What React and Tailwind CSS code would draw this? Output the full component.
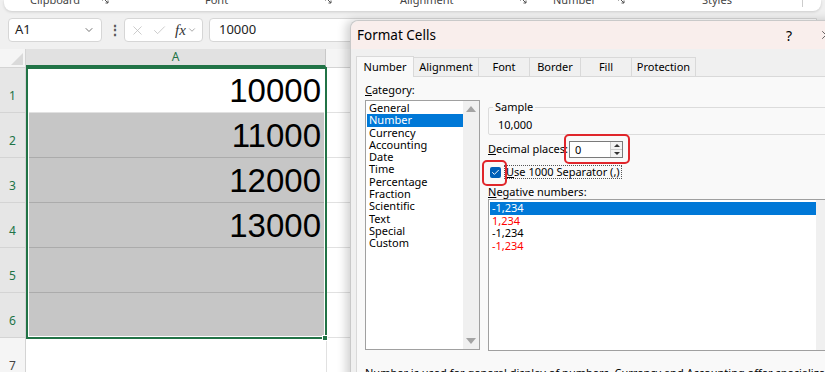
import { ChevronDown, X, Check } from 'lucide-react';

const UI = { fontFamily: '"Noto Sans", "Open Sans", sans-serif' };
const ARIAL = { fontFamily: '"Liberation Sans", Arial, sans-serif' };

const ROWS = [
  { n: 1, v: '10000' },
  { n: 2, v: '11000' },
  { n: 3, v: '12000' },
  { n: 4, v: '13000' },
  { n: 5, v: '' },
  { n: 6, v: '' },
  { n: 7, v: '' },
];

const CATEGORIES = [
  'General', 'Number', 'Currency', 'Accounting', 'Date', 'Time',
  'Percentage', 'Fraction', 'Scientific', 'Text', 'Special', 'Custom',
];

const NEGATIVES = [
  { t: '-1,234', c: 'text-white bg-[#0078d7]' },
  { t: '1,234', c: 'text-[#ff0000]' },
  { t: '-1,234', c: 'text-black' },
  { t: '-1,234', c: 'text-[#ff0000]' },
];

const TABS = [
  { t: 'Number', w: 'w-[58px]' },
  { t: 'Alignment', w: 'w-[65px]' },
  { t: 'Font', w: 'w-[51px]' },
  { t: 'Border', w: 'w-[51px]' },
  { t: 'Fill', w: 'w-[51px]' },
  { t: 'Protection', w: 'w-[64px]' },
];

function Launcher() {
  return (
    <svg width="7" height="7" viewBox="0 0 7 7" className="text-[#555]">
      <path d="M0.5 0.5h3M0.5 0.5v3M2 2l4 4M6 3.5V6H3.5" stroke="currentColor" strokeWidth="1" fill="none" />
    </svg>
  );
}

function Ribbon() {
  return (
    <div className="h-[11px] mx-[4px] bg-white rounded-b-lg shadow-[0_1px_3px_rgba(0,0,0,0.15)] overflow-hidden relative text-[11px] text-[#444]" style={UI}>
      <div className="flex items-center -mt-[9px] h-[18px] pl-[26px]">
        <span className="w-[72px] shrink-0">Clipboard</span>
        <span className="w-[103px] shrink-0"><Launcher /></span>
        <span className="w-[120px] shrink-0">Font</span>
        <span className="w-[75px] shrink-0"><Launcher /></span>
        <span className="w-[120px] shrink-0">Alignment</span>
        <span className="w-[33px] shrink-0"><Launcher /></span>
        <span className="w-[65px] shrink-0">Number</span>
        <span className="w-[84px] shrink-0"><Launcher /></span>
        <span className="w-[100px] shrink-0">Styles</span>
        <span className="w-px h-[14px] bg-[#ccc] shrink-0" />
      </div>
    </div>
  );
}

function FormulaBar() {
  return (
    <div className="flex items-center h-[24px] mt-[7px] px-[8px] gap-[6px]" style={UI}>
      <div className="w-[94px] h-[24px] bg-white border border-[#d6d6d6] rounded-[4px] flex items-center justify-between px-[6px]">
        <span className="text-[13px] text-[#222]">A1</span>
        <ChevronDown size={12} strokeWidth={1.5} className="text-[#444]" />
      </div>
      <span className="text-[14px] text-[#555] font-bold w-[10px] text-center leading-none">⋮</span>
      <div className="w-[79px] h-[24px] bg-white border border-[#d6d6d6] rounded-[4px] flex items-center px-[5px] gap-[7px]">
        <X size={15} strokeWidth={1.2} className="text-[#bbb]" />
        <Check size={15} strokeWidth={1.2} className="text-[#bbb]" />
        <span className="text-[15px] italic text-[#333] ml-[1px]" style={{ fontFamily: '"Liberation Serif", serif' }}>fx</span>
        <ChevronDown size={10} strokeWidth={1.5} className="text-[#777] -ml-[6px]" />
      </div>
      <div className="flex-1 h-[24px] bg-white border border-[#d6d6d6] rounded-l-[4px] flex items-center px-[9px]">
        <span className="text-[13px] text-[#222]">10000</span>
      </div>
    </div>
  );
}

function Sheet() {
  return (
    <div className="mt-[7px] bg-white">
      <div className="flex h-[19px] bg-[#f5f5f5] border-b border-[#d4d4d4]">
        <div className="w-[26px] border-r border-[#d4d4d4] relative">
          <div className="absolute right-[2px] bottom-[2px] w-0 h-0 border-l-[12px] border-l-transparent border-b-[12px] border-b-[#dadada]" />
        </div>
        <div className="w-[300px] bg-[#e1e1e1] border-r border-[#c8c8c8] border-b-2 border-b-[#217346] flex items-center justify-center text-[12px] text-[#217346]" style={UI}>A</div>
        <div className="flex-1" />
      </div>
      <div className="flex">
        <div className="w-[26px] bg-[#f5f5f5]">
          {ROWS.map((r) => (
            <div
              key={r.n}
              className={`h-[45px] border-b border-r border-[#d4d4d4] flex items-end justify-center pb-[7px] text-[12px] ${r.n <= 6 ? 'bg-[#e6e6e6] text-[#217346]' : 'text-[#444]'}`}
              style={UI}
            >
              {r.n}
            </div>
          ))}
        </div>
        <div className="w-[300px] relative">
          {ROWS.map((r) => (
            <div
              key={r.n}
              className={`h-[45px] border-b flex items-end justify-end pr-[5px] pb-[5px] text-[33px] leading-none text-black ${r.n >= 2 && r.n <= 6 ? 'bg-[#c6c6c6] border-[#ababab]' : 'bg-white border-[#e1e1e1]'}`}
              style={ARIAL}
            >
              {r.v}
            </div>
          ))}
          <div className="absolute left-0 top-[-1px] w-[301px] h-[272px] border-2 border-[#217346] pointer-events-none">
            <div className="absolute inset-0 border border-white" />
          </div>
          <div className="absolute left-[296px] top-[267px] w-[6px] h-[6px] bg-[#217346] border border-white" />
        </div>
        <div className="flex-1">
          {ROWS.map((r) => (
            <div key={r.n} className="h-[45px] border-b border-l border-[#e1e1e1]" />
          ))}
        </div>
      </div>
    </div>
  );
}

function Dialog() {
  return (
    <div
      className="absolute left-[350px] top-[20px] w-[500px] h-[380px] bg-[#f0f0f0] rounded-tl-lg shadow-[-4px_0_10px_rgba(0,0,0,0.18)] border-l border-t border-[#c9c9c9] text-[11px] text-black"
      style={UI}
    >
      <div className="h-[28px] bg-[#f9eeec] rounded-tl-lg flex items-center pl-[6px]">
        <span className="text-[13.5px]">Format Cells</span>
        <span className="ml-auto text-[14px]">?</span>
        <X size={14} strokeWidth={1.3} className="ml-[27px] mr-[17px] text-[#333]" />
      </div>
      <div className="flex h-[20px] mt-[7px] ml-[5px] items-end">
        {TABS.map((tab, i) => (
          <div
            key={tab.t}
            className={`${tab.w} flex items-center justify-center border border-[#d9d9d9] border-b-0 ${i === 0 ? 'h-[21px] bg-[#f9f9f9] -mb-px relative z-10' : 'h-[19px] bg-[#f0f0f0] border-l-0'}`}
          >
            {tab.t}
          </div>
        ))}
      </div>
      <div className="ml-[5px] h-[320px] bg-[#f9f9f9] border-t border-l border-[#d9d9d9] pl-[8px] pt-[6px]">
        <div className="flex gap-[8px]">
          <div className="w-[115px]">
            <div className="h-[17px] leading-[14px]"><u>C</u>ategory:</div>
            <div className="h-[250px] border border-[#a0a0a0] bg-white flex">
              <div className="flex-1 pt-[1px] pl-[1px]">
                {CATEGORIES.map((c) => (
                  <div key={c} className={`h-[12.3px] leading-[12.3px] pl-[2px] ${c === 'Number' ? 'bg-[#0078d7] text-white' : ''}`}>{c}</div>
                ))}
              </div>
              <div className="w-[16px] bg-[#f0f0f0] flex flex-col items-center justify-between py-[5px]">
                <div className="w-0 h-0 border-l-[5px] border-r-[5px] border-b-[6px] border-l-transparent border-r-transparent border-b-[#a3a3a3]" />
                <div className="w-0 h-0 border-l-[5px] border-r-[5px] border-t-[6px] border-l-transparent border-r-transparent border-t-[#a3a3a3]" />
              </div>
            </div>
          </div>
          <div className="w-[345px] pt-[17px]">
            <div className="relative mt-[7px] h-[28px] border border-[#dcdcdc] rounded-[2px]">
              <span className="absolute left-[4px] top-[-9px] bg-[#f9f9f9] px-[2px] leading-[16px]">Sample</span>
              <div className="absolute left-[9px] top-[9px] leading-[16px]">10,000</div>
            </div>
            <div className="flex items-center mt-[6px] h-[17px]">
              <span className="w-[81px] shrink-0"><u>D</u>ecimal places:</span>
              <div className="relative w-[54px] h-[17px] border border-[#7a7a7a] bg-white flex">
                <span className="flex-1 pl-[5px] leading-[15px]">0</span>
                <div className="w-[12px] flex flex-col border-l border-[#ccc] bg-[#f3f3f3]">
                  <div className="flex-1 flex items-center justify-center border-b border-[#ccc]">
                    <div className="w-0 h-0 border-l-[3px] border-r-[3px] border-b-[3px] border-l-transparent border-r-transparent border-b-[#333]" />
                  </div>
                  <div className="flex-1 flex items-center justify-center">
                    <div className="w-0 h-0 border-l-[3px] border-r-[3px] border-t-[3px] border-l-transparent border-r-transparent border-t-[#333]" />
                  </div>
                </div>
                <div className="absolute left-[-6px] top-[-8px] w-[66px] h-[30px] border-2 border-[#e0262b] rounded-[5px]" />
              </div>
            </div>
            <div className="flex items-center mt-[7px] h-[14px]">
              <div className="relative ml-[2px] w-[11px] h-[11px] bg-[#005fb8] rounded-[2px] flex items-center justify-center">
                <Check size={9} strokeWidth={2.5} className="text-white" />
                <div className="absolute left-[-8px] top-[-7px] w-[25px] h-[26px] border-2 border-[#e0262b] rounded-[5px]" />
              </div>
              <span className="ml-[3px] border border-dotted border-[#555] px-[1px] leading-[12px]"><u>U</u>se 1000 Separator (,)</span>
            </div>
            <div className="mt-[6px] h-[14px] leading-[14px]"><u>N</u>egative numbers:</div>
            <div className="h-[152px] border border-[#a0a0a0] bg-white flex">
              <div className="flex-1 pt-[2px] pl-[1px]">
                {NEGATIVES.map((n, i) => (
                  <div key={i} className={`h-[12.5px] leading-[12.5px] pl-[2px] ${n.c}`}>{n.t}</div>
                ))}
              </div>
              <div className="w-[16px] bg-[#f0f0f0]" />
            </div>
          </div>
        </div>
        <div className="mt-[15px] leading-[14px]">
          Number is used for general display of numbers. Currency and Accounting offer specialized formatting for monetary value.
        </div>
      </div>
    </div>
  );
}

export default function App() {
  return (
    <div className="w-[825px] h-[372px] overflow-hidden relative bg-[#f0f0f0]">
      <Ribbon />
      <FormulaBar />
      <Sheet />
      <Dialog />
    </div>
  );
}
